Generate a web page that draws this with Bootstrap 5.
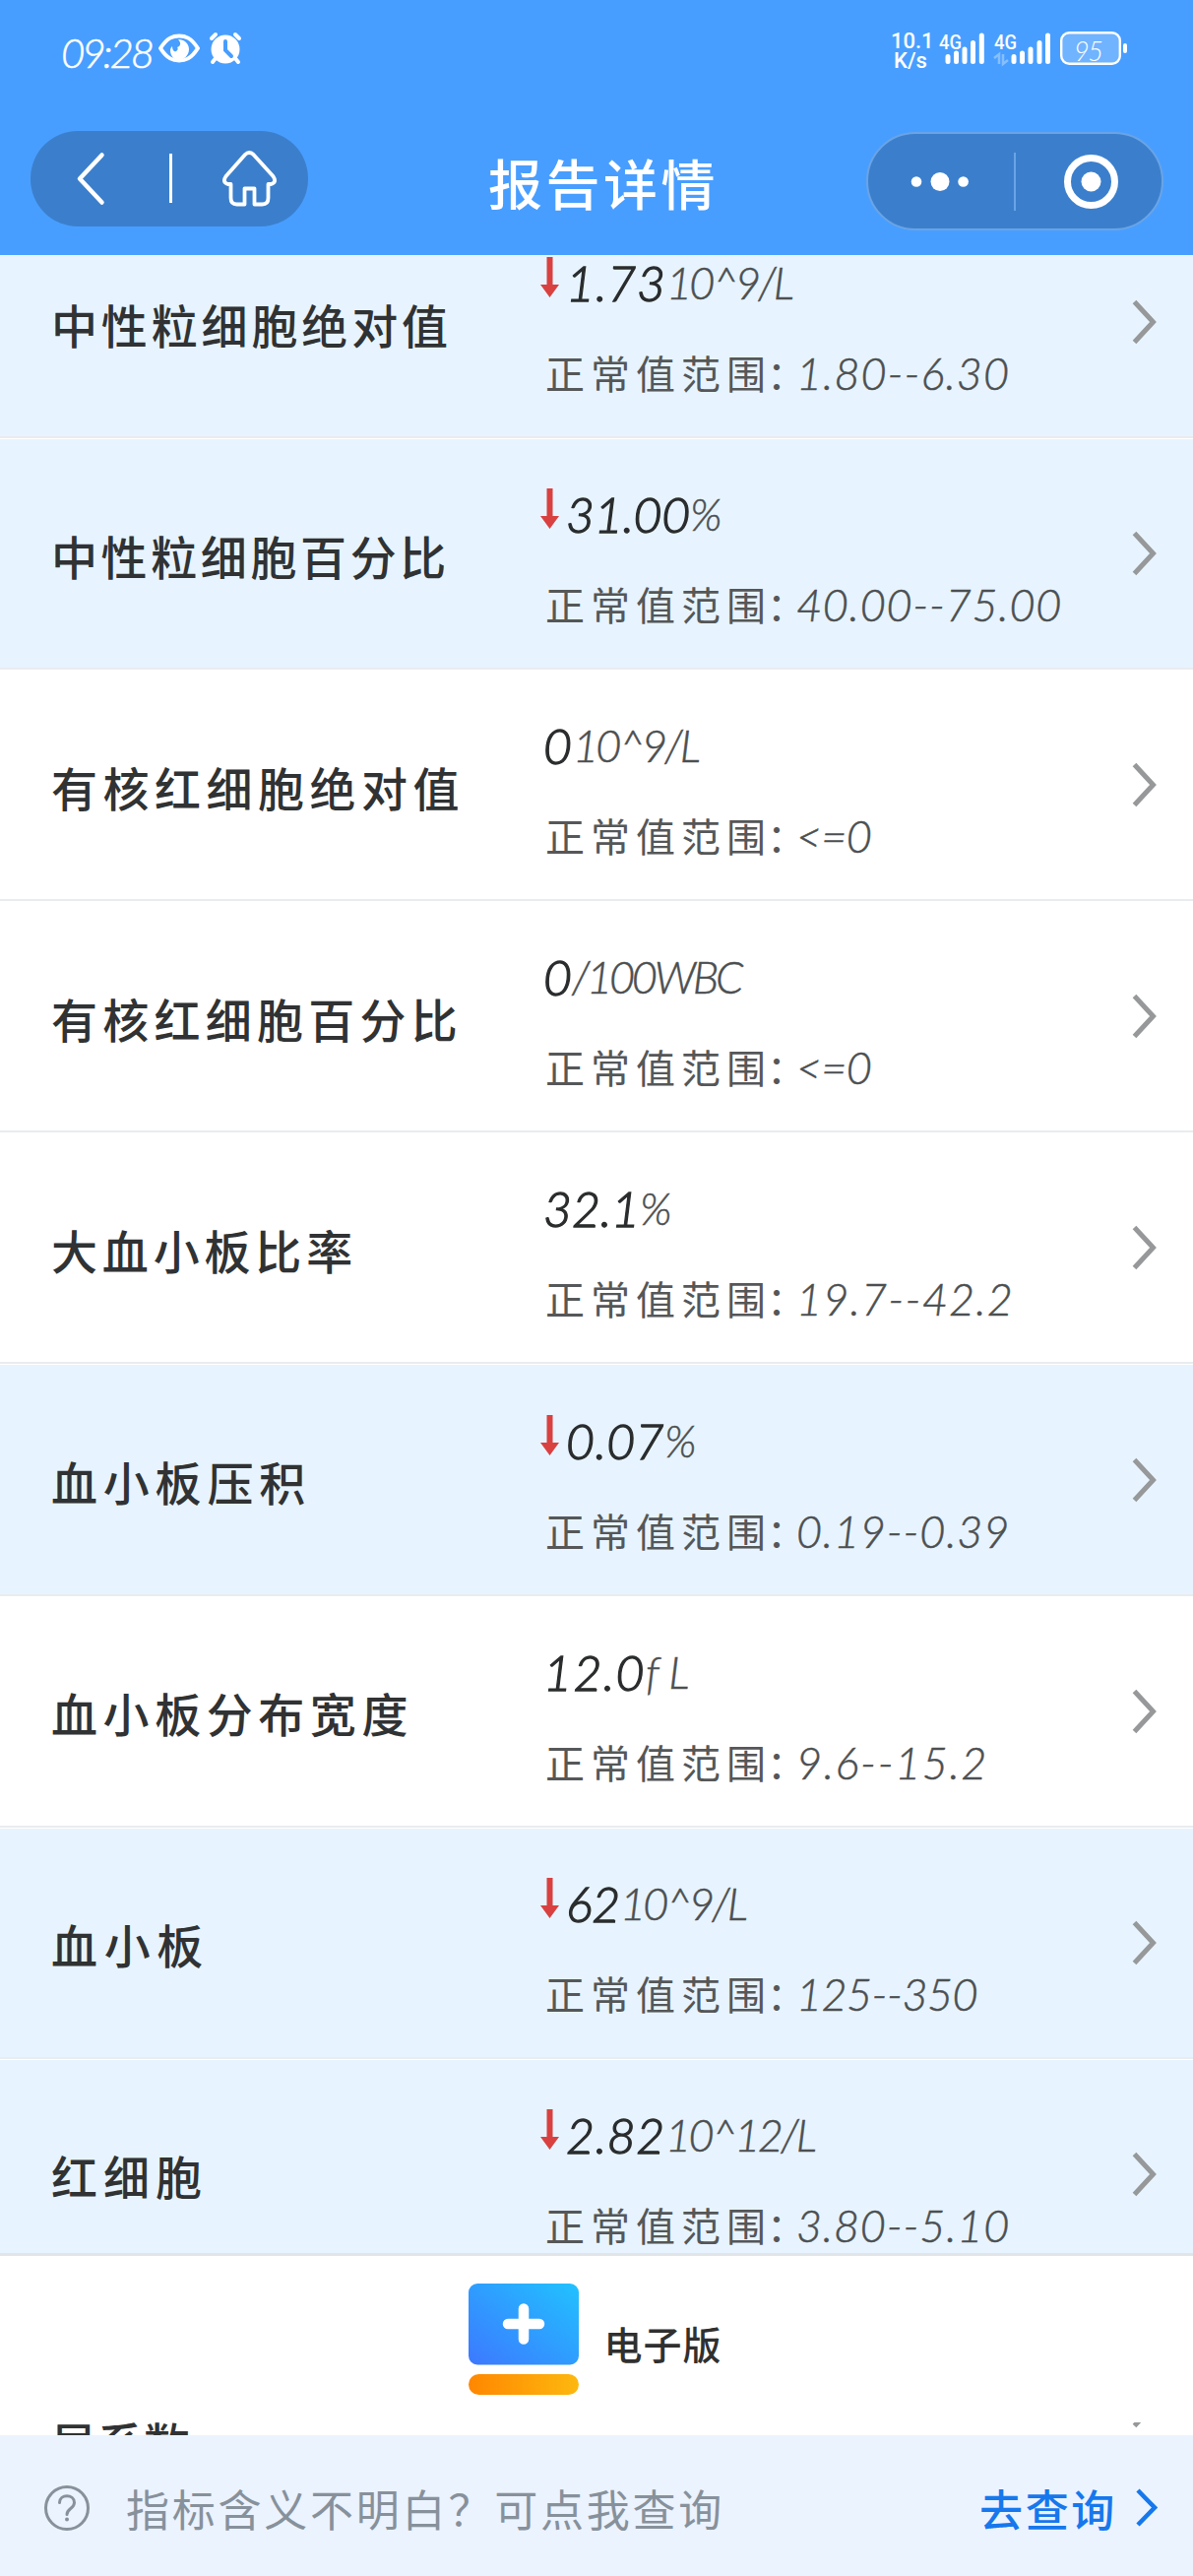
<!DOCTYPE html>
<html lang="zh-CN">
<head>
<meta charset="utf-8">
<meta name="viewport" content="width=device-width, initial-scale=1">
<title>报告详情</title>
<link href="https://cdn.jsdelivr.net/npm/bootstrap@5.3.0/dist/css/bootstrap.min.css" rel="stylesheet">
<style>
body{font-family:Lato,"Noto Sans CJK SC",sans-serif;color:#303030;background:#fff;width:1212px;height:2616px;overflow:hidden}
svg{display:block;flex:none}
.app-head{height:259px;background:#489eff;color:#fff}
.status{height:133px;padding:32px 67px 0 63px}
.clock{font-size:42px;line-height:40px;font-weight:300;font-style:italic;width:98px;margin-top:1px;margin-left:-1px;margin-right:1px;-webkit-text-stroke:.5px #fff}
.net{font:500 22px/20px Roboto,sans-serif;width:40px;margin-right:9px;text-align:center}
.cell{font:500 21px/21px Roboto,sans-serif;fill:#fff}
.batt{font:italic 300 27px Lato,sans-serif;fill:#fff}
.title-bar{height:101px;padding:0 30px 0 31px}
.pill-l{width:282px;height:97px;border-radius:48px;background:#3b7fcc}
.pill-r{width:302px;height:100px;border-radius:50px;background:#3b7fcc;border:2px solid #6aa4e6;margin-top:1px}
.page-title{font-size:55px;line-height:60px;font-weight:500;margin-left:33px;margin-top:7px}
.viewport{height:2214px}
.report{margin-top:-49px}
.item{height:235.1px;border-top:1px solid #fff;border-bottom:2px solid #e9ecef;padding:0 36px 0 52px;background:#fff}
.item.low{background:#e7f4ff}
.item-name{width:497px;font-size:47px;line-height:71px;font-weight:500;padding-top:8px;color:#303233}
.item-data{flex:1;padding-top:13px}
.res{height:50px;margin-bottom:41px}
.res .arrow{margin-top:-11px;margin-right:7px}
.num{font-size:50px;line-height:50px;font-style:italic;font-weight:300;color:#2a2c2d;-webkit-text-stroke:1.3px #2a2c2d}
.unit,.rng{font-size:45px;line-height:50px;font-style:italic;font-weight:300;color:#4c4f51;-webkit-text-stroke:.5px #4c4f51}
.res .no-arrow{width:3px}
.lbl{font-size:40px;line-height:50px;letter-spacing:6px;width:260px;flex:none;white-space:nowrap;padding-left:5px;color:#555758}
.lbl span{letter-spacing:0;margin-left:-5px;font-family:"Noto Sans CJK SC",sans-serif;font-feature-settings:"halt"}
.dl-panel{left:0;right:0;bottom:13px;height:172px;background:#fff;border-top:3px solid #e1e5e8}
.dl-panel b{font-size:39px;font-weight:500;margin-left:25px;margin-top:10px;margin-right:2px;line-height:44px;letter-spacing:1px}
.help{height:143px;background:#ebf3ff;padding:4px 36px 0 44px;color:#87919b;font-size:44px}
.help .ask{margin-left:36px;margin-top:4px}
.help .go{color:#1678ec;font-weight:500;margin-right:19px;margin-top:4px}
[data-w]{display:inline-block;white-space:nowrap}
</style>
<script src="https://cdn.jsdelivr.net/npm/bootstrap@5.3.0/dist/js/bootstrap.bundle.min.js"></script>
</head>
<body>
<svg width="0" height="0" class="position-absolute">
  <symbol id="down" viewBox="0 0 19 41"><path d="M6.5 0h6v28H19L9.500 41 0 28h6.500z" fill="#d94141"/></symbol>
  <symbol id="next" viewBox="0 0 26 46"><path d="M2.500 2.500 21.500 23 2.500 43.500" fill="none" stroke="currentColor" stroke-width="5"/></symbol>
</svg>
<header class="app-head">
  <div class="status d-flex align-items-start justify-content-between">
    <div class="d-flex">
      <div class="clock"><span data-w="92">09:28</span></div>
      <svg width="42" height="32" viewBox="0 0 42 32"><path d="M2 17C9 6 15 4.500 21 4.500S33 6 40 17C33 28 27 29.500 21 29.500S9 28 2 17z" fill="none" stroke="#fff" stroke-width="4" stroke-linejoin="round"/><path d="M20 8c6 0 11 4 11 10s-5 11-10 11-9-4-9-10c0-2 1-3 2-4 0 4 2 6 4 5s2-3 1-4c4-1 4-5 1-8z" fill="#fff"/></svg>
      <svg class="ms-2" width="36" height="34" viewBox="0 0 36 34"><g stroke="#fff" stroke-width="4" stroke-linecap="round"><path d="M4 7l4-4M32 7l-4-4M9 26l-4 5M27 26l4 5"/></g><circle cx="18" cy="18" r="14.500" fill="#fff"/><path d="M18 10v9l6 6" fill="none" stroke="#489eff" stroke-width="4" stroke-linecap="round"/></svg>
    </div>
    <div class="d-flex">
      <div class="net">10.1<br>K/s</div>
      <svg width="191" height="38" viewBox="954 32 191 38">
        <text class="cell" x="954" y="49.500" textLength="23" lengthAdjust="spacingAndGlyphs">4G</text>
        <text class="cell" x="1010" y="49.500" textLength="23" lengthAdjust="spacingAndGlyphs">4G</text>
        <g stroke="#fff" stroke-width="5" stroke-linecap="round"><path d="M963 57.500v5M971.500 54v8.500M980 50v12.500M988.500 43.500v19M997.300 36v26.500M1030 57.500v5M1038.500 54v8.500M1047 50v12.500M1056 43.500v19M1064.500 36v26.500"/></g>
        <path d="M1010 59l5-4v10M1019 55v10l5-4" fill="none" stroke="#86bfff" stroke-width="2.500"/>
        <rect x="1078.200" y="33.200" width="59.600" height="31.600" rx="8" fill="#70b3ff" stroke="#fff" stroke-width="2.400"/>
        <rect x="1141" y="44" width="4" height="10" rx="2" fill="#fff"/>
        <text class="batt" x="1091" y="62" textLength="30">95</text>
      </svg>
    </div>
  </div>
  <div class="title-bar d-flex justify-content-between align-items-start">
    <svg class="pill-l" viewBox="31 133 282 97"><g fill="none" stroke="#fff" stroke-linecap="round" stroke-linejoin="round"><path d="M103.500 157.500 81 181.500l22.500 24" stroke-width="4.500"/><path d="M173.500 156v50" stroke-width="3" stroke-linecap="butt"/><path d="M249 157q4-4 8.500 0l20 22q4 6-2 8h-3v14q0 6.500-6 6.500h-8v-16h-10v16h-8q-6 0-6-6.500v-14h-3q-6-2-2-8z" stroke-width="3.800"/></g></svg>
    <h1 class="page-title mb-0 align-self-center"><span data-w="234">报告详情</span></h1>
    <svg class="pill-r" viewBox="882 136 298 96"><g fill="#fff"><circle cx="931" cy="184.500" r="5.300"/><circle cx="955" cy="184.500" r="9.500"/><circle cx="978.600" cy="184.500" r="5.300"/><circle cx="1108.500" cy="184.500" r="10"/></g><circle cx="1108.500" cy="184.500" r="24" fill="none" stroke="#fff" stroke-width="7"/><path d="M1031 155v59" stroke="#6aa4e6" stroke-width="2"/></svg>
  </div>
</header>
<main class="viewport position-relative overflow-hidden">
  <div class="report" id="report"></div>
  <div class="dl-panel position-absolute d-flex justify-content-center align-items-center">
    <svg width="112" height="114" viewBox="0 0 112 114"><defs><linearGradient id="g1" x1="0" y1="1" x2="1" y2="0"><stop stop-color="#3d78ff"/><stop offset="1" stop-color="#21c2ff"/></linearGradient><linearGradient id="g2"><stop stop-color="#ff8700"/><stop offset="1" stop-color="#fdb80f"/></linearGradient></defs><rect width="112" height="82.500" rx="9" fill="url(#g1)"/><rect y="92" width="112" height="21" rx="10.500" fill="url(#g2)"/><path d="M56 25.500v31M40 41h32" stroke="#fff" stroke-width="10.500" stroke-linecap="round"/></svg>
    <b>电子版</b>
  </div>
</main>
<footer class="help d-flex align-items-center">
  <svg width="48" height="48" viewBox="0 0 48 48" fill="none" stroke="#87919b" stroke-width="3"><circle cx="24" cy="24" r="21.500"/><path d="M16.500 18.500c0-9 15-9 15 0 0 6-7.500 6-7.500 12" stroke-linecap="round"/><circle cx="24" cy="35.500" r="2" fill="#87919b" stroke="none"/></svg>
  <span class="ask"><span data-w="608">指标含义不明白？可点我查询</span></span>
  <span class="go ms-auto"><span data-w="140">去查询</span></span>
  <svg width="22" height="39" viewBox="0 0 22 39"><path d="M2 2 19 19.500 2 37" fill="none" stroke="#1678ec" stroke-width="4.500"/></svg>
</footer>
<script>
// name, name width, low flag, value, width, unit, width, range, width
const items = [
  ['中性粒细胞绝对值',407,1,'1.73',102,'10^9/L',127,'1.80--6.30',217],
  ['中性粒细胞百分比',405,1,'31.00',126,'%',28,'40.00--75.00',270],
  ['有核红细胞绝对值',420,0,'0',30,'10^9/L',127,'<=0',76],
  ['有核红细胞百分比',418,0,'0',29,'/100WBC',171,'<=0',76],
  ['大血小板比率',311,0,'32.1',98,'%',30,'19.7--42.2',221],
  ['血小板压积',264,1,'0.07',100,'%',29,'0.19--0.39',217],
  ['血小板分布宽度',368,0,'12.0',104,'fL',54,'9.6--15.2',195],
  ['血小板',161,1,'62',55,'10^9/L',127,'125--350',184],
  ['红细胞',159,1,'2.82',101,'10^12/L',151,'3.80--5.10',217],
  ['红细胞分布宽度变<br>异系数',0,0,'',0,'',0,'',0]
];
const fit = (cls, w, t) => `<span class="${cls}" ${w ? `data-w="${w}"` : ''}>${t.replace('<=', '&lt;=')}</span>`;
document.getElementById('report').innerHTML = items.map(([n,nw,low,v,vw,u,uw,r,rw]) => `
  <div class="item d-flex align-items-center${low ? ' low' : ''}">
    <div class="item-name">${fit('', nw, n)}</div>
    <div class="item-data">${v ? `
      <div class="res d-flex align-items-center">${low ? '<svg class="arrow" width="19" height="41"><use href="#down"/></svg>' : '<i class="no-arrow"></i>'}${fit('num', vw, v)}${fit('unit', uw, u)}</div>
      <div class="d-flex align-items-center"><span class="lbl">正常值范围<span>：</span></span>${fit('rng', rw, r)}</div>` : ''}
    </div>
    <svg width="26" height="46" style="color:#969899"><use href="#next"/></svg>
  </div>`).join('');
// spread each string over its column width
document.querySelectorAll('[data-w]').forEach(e => {
  const w = +e.dataset.w;
  e.style.letterSpacing = (w - e.getBoundingClientRect().width) / e.textContent.length + 'px';
});
</script>
</body>
</html>
